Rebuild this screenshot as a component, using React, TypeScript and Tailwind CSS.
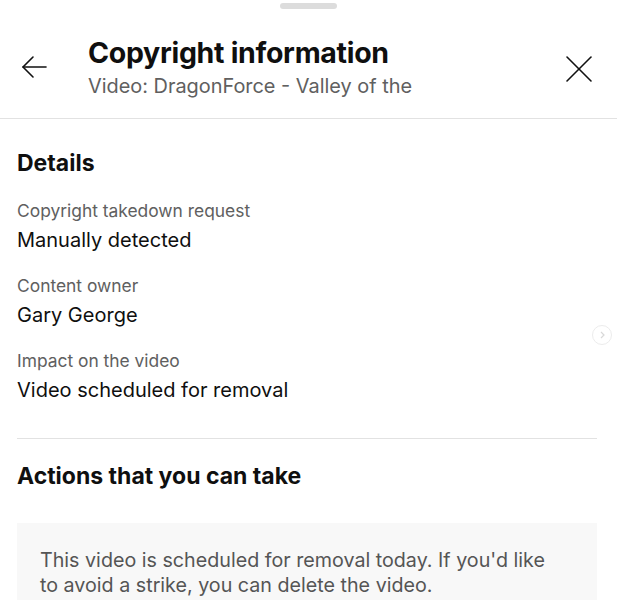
import React from 'react';

interface DetailItem {
    label: string;
    value: string;
}

const details: DetailItem[] = [
    { label: 'Copyright takedown request', value: 'Manually detected' },
    { label: 'Content owner', value: 'Gary George' },
    { label: 'Impact on the video', value: 'Video scheduled for removal' },
];

const BackArrow = () => (
    <svg width="28" height="28" viewBox="0 0 28 28" fill="none" stroke="#111" strokeWidth="1.6" strokeLinecap="round" strokeLinejoin="round">
        <path d="M26 14H3" />
        <path d="M13 4L3 14l10 10" />
    </svg>
);

const CloseIcon = () => (
    <svg width="28" height="28" viewBox="0 0 28 28" fill="none" stroke="#111" strokeWidth="1.6" strokeLinecap="round">
        <path d="M2 2l24 24" />
        <path d="M26 2L2 26" />
    </svg>
);

const App = () => {
    return (
        <div className="relative w-[617px] h-[600px] overflow-hidden bg-white font-['Inter',sans-serif] text-[#0f0f0f]">
            {/* DRAG HANDLE */}
            <div className="flex justify-center pt-[3px]">
                <div className="h-[6px] w-[57px] rounded-full bg-[#dcdcdc]" />
            </div>

            {/* HEADER */}
            <div className="flex items-start h-[110px] border-b border-[#e2e2e2]">
                <div className="pl-[20px] pt-[44px] w-[88px]">
                    <BackArrow />
                </div>
                <div className="flex-1 pt-[26px]">
                    <div className="text-[28.5px] leading-[36px] font-bold tracking-[-0.3px]">Copyright information</div>
                    <div className="text-[19.9px] leading-[28px] text-[#606060] mt-[1px]">Video: DragonForce - Valley of the</div>
                </div>
                <div className="pr-[24px] pt-[46px]">
                    <CloseIcon />
                </div>
            </div>

            {/* DETAILS */}
            <div className="px-[17px]">
                <div className="text-[23px] leading-[28px] font-bold mt-[30px]">Details</div>
                <div className="flex flex-col gap-[17px] mt-[22px]">
                    {details.map((item) => (
                        <div key={item.label}>
                            <div className="text-[17.4px] leading-[24px] text-[#606060]">{item.label}</div>
                            <div className="text-[20px] leading-[34px]">{item.value}</div>
                        </div>
                    ))}
                </div>
                <div className="border-b border-[#e2e2e2] mt-[31px] mr-[3px]" />

                {/* ACTIONS */}
                <div className="text-[23px] leading-[30px] font-bold mt-[22px]">Actions that you can take</div>
                <div className="mt-[32px] mr-[3px] bg-[#f8f8f8] pl-[23px] pr-[40px] pt-[25px] pb-[20px]">
                    <div className="text-[19.7px] leading-[25px] text-[#555]">
                        This video is scheduled for removal today. If you'd like to avoid a strike, you can delete the video.
                    </div>
                </div>
            </div>

            {/* FLOATING SCROLL HINT */}
            <div className="absolute right-[5px] top-[325px] flex h-[20px] w-[20px] items-center justify-center rounded-full border border-[#ececec]">
                <svg width="8" height="8" viewBox="0 0 8 8" fill="none" stroke="#d8d8d8" strokeWidth="1.2">
                    <path d="M3 1l3 3-3 3" />
                </svg>
            </div>
        </div>
    );
};

export default App;
